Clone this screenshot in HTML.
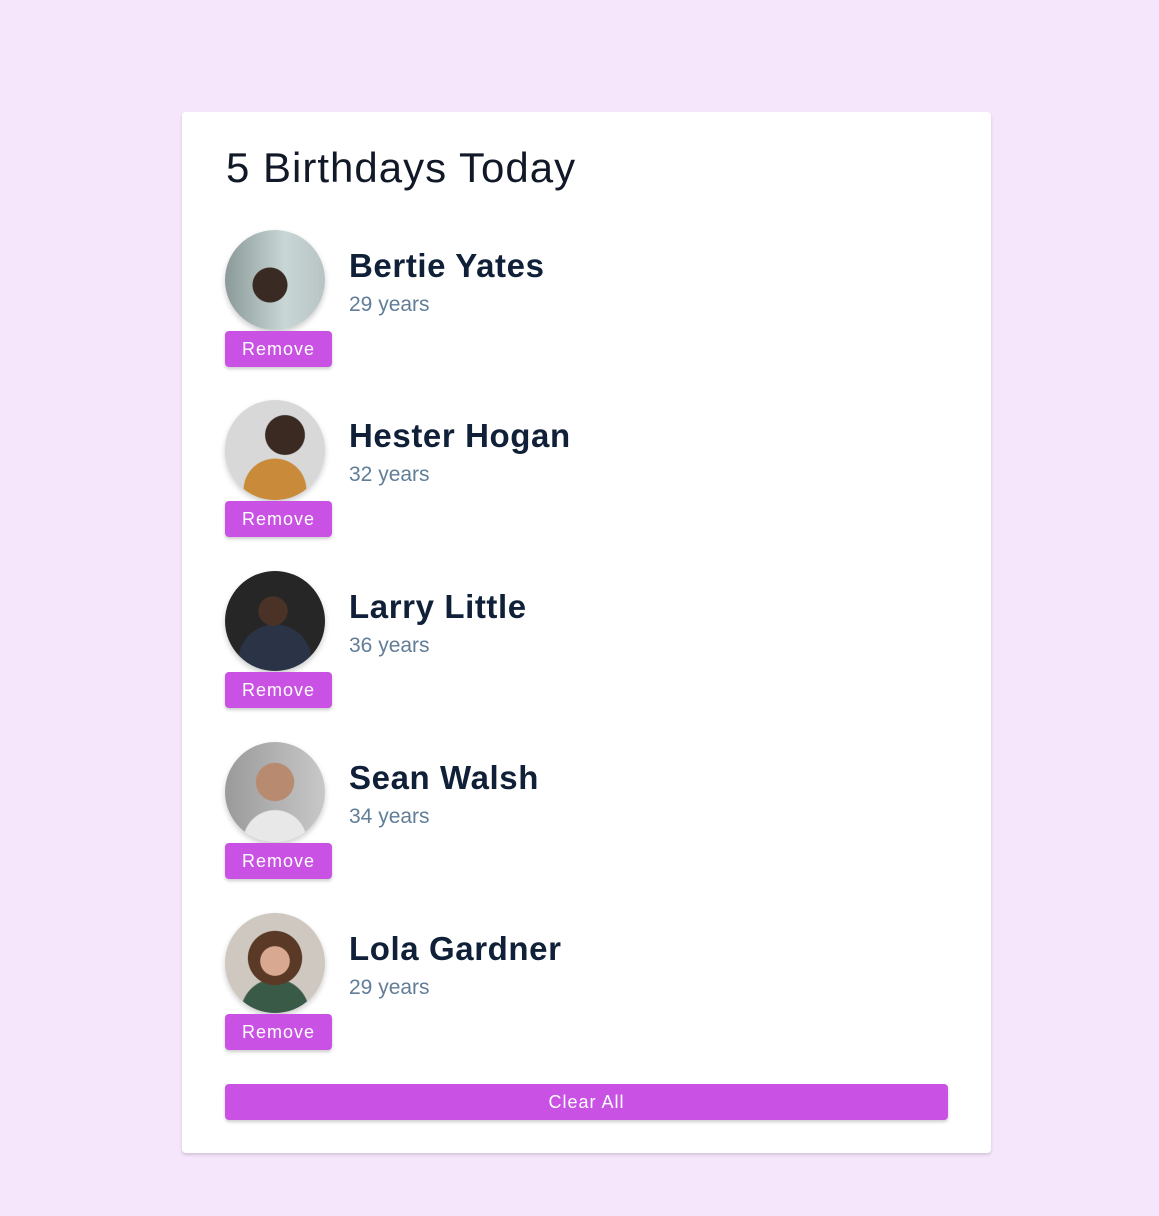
<!DOCTYPE html>
<html><head><meta charset="utf-8"><style>
*{box-sizing:border-box;margin:0;padding:0}
html,body{width:1159px;height:1216px;background:#f6e6fc;font-family:"Liberation Sans",sans-serif;overflow:hidden}
.card{position:absolute;left:182px;top:112px;width:809px;height:1041px;background:#fff;border-radius:4px;box-shadow:0 2px 3px rgba(0,0,0,.15)}
h3{position:absolute;left:44px;top:32px;font-size:42px;font-weight:400;letter-spacing:1px;color:#111827}
.row{position:absolute;left:43px;width:600px;height:140px}
.av{position:absolute;left:0;top:0;width:100px;height:100px;border-radius:50%;box-shadow:0 3px 6px rgba(0,0,0,.2)}
.btn{position:absolute;left:0;top:101px;width:107px;height:36px;background:#c952e5;color:#fff;border-radius:4px;font-size:18px;text-align:center;line-height:36px;letter-spacing:1px;box-shadow:0 2px 3px rgba(0,0,0,.2)}
.name{position:absolute;left:124px;top:17px;font-size:33px;font-weight:700;color:#102038;letter-spacing:0.6px;white-space:nowrap}
.yrs{position:absolute;left:124px;top:63px;font-size:21px;color:#617d98;white-space:nowrap}
.clear{position:absolute;left:43px;top:972px;width:723px;height:36px;background:#c952e5;color:#fff;border-radius:4px;font-size:18px;text-align:center;line-height:36px;letter-spacing:1px;box-shadow:0 2px 3px rgba(0,0,0,.2)}
</style></head><body>
<div class="card">
<h3>5 Birthdays Today</h3>
<div class="row" style="top:118px"><div class="av" style="background:radial-gradient(circle at 45% 55%,#3a2a24 0 22%,transparent 23%),linear-gradient(90deg,#8a9a98,#c9d6d6 60%,#b8c4c4)"></div><div class="btn">Remove</div><div class="name">Bertie Yates</div><div class="yrs">29 years</div></div>
<div class="row" style="top:288px"><div class="av" style="background:radial-gradient(circle at 50% 90%,#c98a3a 0 30%,transparent 31%),radial-gradient(circle at 60% 35%,#3a2a22 0 22%,transparent 23%),#d8d8d8"></div><div class="btn">Remove</div><div class="name">Hester Hogan</div><div class="yrs">32 years</div></div>
<div class="row" style="top:459px"><div class="av" style="background:radial-gradient(circle at 48% 40%,#4a3226 0 18%,transparent 19%),radial-gradient(circle at 50% 90%,#2a3446 0 35%,transparent 36%),#262626"></div><div class="btn">Remove</div><div class="name">Larry Little</div><div class="yrs">36 years</div></div>
<div class="row" style="top:630px"><div class="av" style="background:radial-gradient(circle at 50% 40%,#b88a70 0 24%,transparent 25%),radial-gradient(circle at 50% 100%,#e8e8e8 0 28%,transparent 29%),linear-gradient(90deg,#9a9a9a,#c8c8c8)"></div><div class="btn">Remove</div><div class="name">Sean Walsh</div><div class="yrs">34 years</div></div>
<div class="row" style="top:801px"><div class="av" style="background:radial-gradient(circle at 50% 48%,#d8a890 0 20%,transparent 21%),radial-gradient(circle at 50% 45%,#5a3a26 0 36%,transparent 37%),radial-gradient(circle at 50% 100%,#3a5a48 0 30%,transparent 31%),#cfc8c0"></div><div class="btn">Remove</div><div class="name">Lola Gardner</div><div class="yrs">29 years</div></div>
<div class="clear">Clear All</div>
</div>
</body></html>
